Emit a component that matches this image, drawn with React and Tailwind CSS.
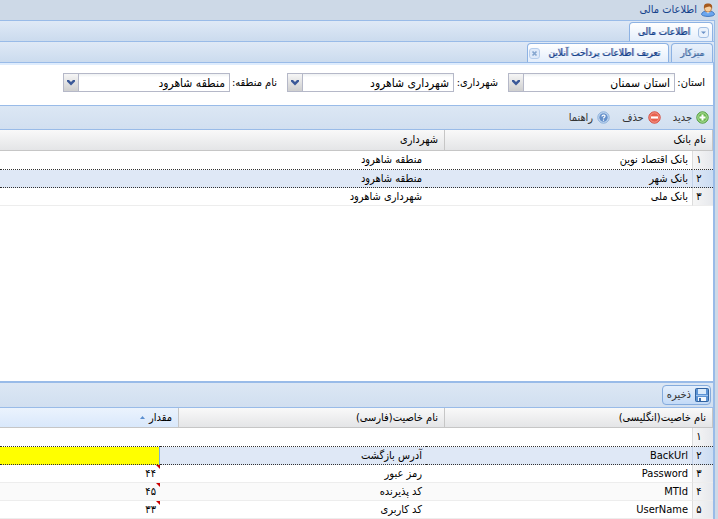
import React from "react";

const banks = [
  { id: 1, no: "۱", name: "بانک اقتصاد نوین", city: "منطقه شاهرود" },
  { id: 2, no: "۲", name: "بانک شهر", city: "منطقه شاهرود" },
  { id: 3, no: "۳", name: "بانک ملی", city: "شهرداری شاهرود" },
];

const properties = [
  { id: 1, no: "۱", en: "", fa: "", value: "" },
  { id: 2, no: "۲", en: "BackUrl", fa: "آدرس بازگشت", value: "" },
  { id: 3, no: "۳", en: "Password", fa: "رمز عبور", value: "۴۴" },
  { id: 4, no: "۴", en: "MTId", fa: "کد پذیرنده", value: "۴۵" },
  { id: 5, no: "۵", en: "UserName", fa: "کد کاربری", value: "۳۳" },
];

function UserIcon() {
  return (
    <svg width="14" height="14" viewBox="0 0 14 14" aria-hidden="true">
      <path d="M.6 11.600C.6 9.200 3 8 7 8s6.400 1.200 6.400 3.600C12.500 14 1.500 14 .6 11.600z" fill="#6ba6ee" stroke="#2765b5" strokeWidth="0.800" />
      <path d="M5 8.500l2 2 2-2z" fill="#fff" />
      <ellipse cx="7" cy="5.200" rx="3.600" ry="3.900" fill="#f7cfa0" stroke="#a8642a" strokeWidth="0.700" />
      <path d="M3 5.500C2.500 1.600 4 .4 7 .4s4.700 1.300 4.100 5.100C10.500 4.300 9.500 3.500 8.500 3.400 6.500 4 4 3.800 3 5.500z" fill="#a65a1e" />
    </svg>
  );
}

function MenuIcon() {
  return (
    <svg width="11" height="11" viewBox="0 0 11 11" aria-hidden="true">
      <rect x="0.500" y="0.500" width="10" height="10" rx="2.500" fill="#eaf2fc" stroke="#a3bfe3" />
      <path d="M3 4.500h5L5.500 7z" fill="#6b92c8" />
    </svg>
  );
}

function CloseIcon() {
  return (
    <svg width="11" height="11" viewBox="0 0 11 11" aria-hidden="true">
      <rect x="0.500" y="0.500" width="10" height="10" rx="2.500" fill="#dfeafa" stroke="#b6cdec" />
      <path d="M3.500 3.500l4 4M7.500 3.500l-4 4" stroke="#86a6cf" strokeWidth="1.700" />
    </svg>
  );
}

function AddIcon() {
  return (
    <svg width="13" height="13" viewBox="0 0 13 13" aria-hidden="true">
      <circle cx="6.500" cy="6.500" r="5.700" fill="#6dba52" stroke="#4d9a3a" />
      <circle cx="6.500" cy="6.500" r="4.700" fill="none" stroke="#b9e2aa" strokeWidth="0.900" />
      <path d="M6.500 3.500v6M3.500 6.500h6" stroke="#fff" strokeWidth="2" />
    </svg>
  );
}

function RemoveIcon() {
  return (
    <svg width="13" height="13" viewBox="0 0 13 13" aria-hidden="true">
      <circle cx="6.500" cy="6.500" r="5.700" fill="#e8604e" stroke="#d5473a" />
      <circle cx="6.500" cy="6.500" r="4.700" fill="none" stroke="#f4a295" strokeWidth="0.900" />
      <path d="M3 6.500h7" stroke="#fff" strokeWidth="2.200" />
    </svg>
  );
}

function HelpIcon() {
  return (
    <svg width="13" height="13" viewBox="0 0 13 13" aria-hidden="true">
      <circle cx="6.500" cy="6.500" r="5.700" fill="#c4d9f1" stroke="#8aafdb" />
      <circle cx="6.500" cy="6.500" r="4.200" fill="#6590ca" />
      <path d="M5 5.400C5 3.600 8 3.600 8 5.300 8 6.300 6.500 6.300 6.500 7.500M6.500 8.500v1.200" fill="none" stroke="#fff" strokeWidth="1.200" />
    </svg>
  );
}

function SaveIcon() {
  return (
    <svg width="14" height="14" viewBox="0 0 14 14" aria-hidden="true">
      <rect x="0.500" y="0.500" width="13" height="13" rx="1" fill="#5c93d4" stroke="#31629f" />
      <rect x="3" y="1" width="8" height="5" fill="#d9eafb" />
      <path d="M1 7.500h12" stroke="#9dc3ee" />
      <rect x="3" y="9" width="8" height="4" fill="#f4f8fc" />
      <rect x="4" y="10" width="2" height="3" fill="#3e6fad" />
    </svg>
  );
}

function Combo({ id, label, value, labelClass }) {
  return (
    <div className="flex items-center">
      <label htmlFor={id} className={`whitespace-nowrap ${labelClass}`}>
        {label}
      </label>
      <div className="relative">
        <select
          id={id}
          className="block h-[19px] w-[167px] appearance-none border border-[#b5b8c8] bg-white bg-linear-to-b from-[#eef1f3] to-white to-20% pr-1 pl-4 text-xs leading-4 text-black outline-none"
        >
          <option>{value}</option>
        </select>
        <span className="pointer-events-none absolute top-px bottom-px left-px flex w-[15px] items-center justify-center border-r border-[#b5b8c8] bg-linear-to-b from-[#f6f6f6] to-[#cfcfcf]">
          <svg width="8" height="6" viewBox="0 0 8 6" aria-hidden="true">
            <path d="M0 0h2l2 2 2-2h2v1.500L4 5.500 0 1.500z" fill="#3b5998" />
          </svg>
        </span>
      </div>
    </div>
  );
}

function ToolButton({ icon, children }) {
  return (
    <button type="button" className="flex items-center gap-1 text-[#333]">
      {icon}
      <span>{children}</span>
    </button>
  );
}

const strip = "flex h-[21px] shrink-0 items-end gap-0.5 border-b border-[#99bbe8] bg-linear-to-b from-[#dfe9f6] to-[#cbdbee] pr-px";
const tab = "flex h-[19px] items-center gap-2 rounded-t-sm border border-b-0 border-[#8db2e3] bg-linear-to-b text-[10px]";
const activeTab = "from-white to-[#e4eefb] text-[#15428b] [text-shadow:1px_0_0_#15428b99]";
const idleTab = "from-[#e9f1fb] to-[#d4e2f5] text-[#416aa3] [text-shadow:1px_0_0_#416aa399]";
const headRow = "bg-linear-to-b from-[#f9f9f9] to-[#e3e4e6]";
const headCell = "border-b border-l border-b-[#c6c6c6] border-l-[#c6c6c6] px-1.5 py-0 text-right font-normal";

function numberCell(active) {
  const base = "border-l py-0 pr-2 pl-0 text-center";
  return active
    ? `${base} border-l-[#c3d3ea] bg-linear-to-l from-[#cbdcf2] to-[#dfe8f6]`
    : `${base} border-l-[#dcdcdc] bg-linear-to-l from-[#e6e8ec] to-[#f6f6f6]`;
}

function rowLine(active, beforeActive) {
  if (active || beforeActive) return "border-b border-b-[#333] [border-bottom-style:dotted]";
  return "border-b border-b-[#ededed]";
}

export default function App() {
  return (
    <div
      dir="rtl"
      className="flex h-screen flex-col overflow-hidden bg-[#cdd9e7] pr-[3px] font-['DejaVu_Sans_Condensed','DejaVu_Sans',sans-serif] text-[11px] leading-[14px] text-black"
    >
      <header className="flex h-5 shrink-0 items-center gap-1 text-[#15428b]">
        <UserIcon />
        <h1>اطلاعات مالی</h1>
      </header>

      <main className="flex min-h-0 flex-1 flex-col border-t border-r border-[#99bbe8] bg-white">
        <nav className={strip}>
          <button type="button" className={`${tab} ${activeTab} pr-[3px] pl-2`}>
            <MenuIcon />
            <span>اطلاعات مالی</span>
          </button>
        </nav>
        <nav className={strip}>
          <button type="button" className={`${tab} ${idleTab} px-2`}>
            میزکار
          </button>
          <button type="button" className={`${tab} ${activeTab} pr-2 pl-px`}>
            <span>تعریف اطلاعات پرداخت آنلاین</span>
            <CloseIcon />
          </button>
        </nav>

        <div className="flex min-h-0 flex-1 flex-col border-r border-[#99bbe8]">
          <form className="flex h-[43px] shrink-0 items-start gap-2.5 border-t-2 border-b border-t-[#deecfd] border-b-[#99bbe8] pt-2 pr-2">
            <Combo id="province" label="استان:" value="استان سمنان" labelClass="w-[30px]" />
            <Combo id="municipality" label="شهرداری:" value="شهرداری شاهرود" labelClass="w-11" />
            <Combo id="region" label="نام منطقه:" value="منطقه شاهرود" labelClass="w-[47px]" />
          </form>

          <div className="flex h-6 shrink-0 items-center gap-3 border-b border-[#99bbe8] bg-linear-to-b from-[#dce7f4] to-[#d1dff0] pr-1">
            <ToolButton icon={<AddIcon />}>جدید</ToolButton>
            <ToolButton icon={<RemoveIcon />}>حذف</ToolButton>
            <ToolButton icon={<HelpIcon />}>راهنما</ToolButton>
          </div>

          <section className="min-h-0 flex-1 overflow-hidden">
            <table className="w-full table-fixed border-separate border-spacing-0">
              <colgroup>
                <col className="w-[21px]" />
                <col className="w-[248px]" />
                <col className="w-[18px]" />
                <col />
              </colgroup>
              <thead>
                <tr className={headRow}>
                  <th colSpan={2} className={`${headCell} h-[21px] border-r border-r-[#c6c6c6]`}>نام بانک</th>
                  <th colSpan={2} className={`${headCell} border-l-0`}>شهرداری</th>
                </tr>
              </thead>
              <tbody>
                {banks.map((bank, i) => {
                  const active = i === 1;
                  const line = rowLine(active, i === 0);
                  return (
                    <tr key={bank.id} className={active ? "bg-[#dfe8f6]" : "bg-white"}>
                      <td className={`${i === 0 ? "h-[19px]" : "h-[18px]"} ${numberCell(active)} ${line}`}>{bank.no}</td>
                      <td colSpan={2} className={`px-1 py-0 ${line}`}>{bank.name}</td>
                      <td className={`px-1 py-0 ${line}`}>{bank.city}</td>
                    </tr>
                  );
                })}
              </tbody>
            </table>
          </section>

          <section className="shrink-0 border-t-2 border-[#99bbe8]">
            <div className="flex h-[25px] items-center border-b border-[#99bbe8] bg-linear-to-b from-[#dce7f4] to-[#d1dff0] pr-0.5">
              <button
                type="button"
                className="flex h-5 items-center gap-1 rounded-sm border border-[#84abdd] bg-linear-to-b from-[#e4effc] to-[#c3daf7] pr-px pl-1 text-[#333]"
              >
                <SaveIcon />
                <span>ذخیره</span>
              </button>
            </div>
            <table className="w-full table-fixed border-separate border-spacing-0">
              <colgroup>
                <col className="w-[21px]" />
                <col className="w-[248px]" />
                <col className="w-[18px]" />
                <col className="w-[248px]" />
                <col className="w-[18px]" />
                <col />
              </colgroup>
              <thead>
                <tr className={headRow}>
                  <th colSpan={2} className={`${headCell} h-5 border-r border-r-[#c6c6c6]`}>نام خاصیت(انگلیسی)</th>
                  <th colSpan={2} className={headCell}>نام خاصیت(فارسی)</th>
                  <th colSpan={2} aria-sort="ascending" className={`${headCell} border-l-0 bg-linear-to-b from-[#ebf3fd] to-[#d9e8fb]`}>
                    <span className="flex items-center gap-1">
                      مقدار
                      <svg width="5" height="3" viewBox="0 0 5 3" aria-hidden="true">
                        <path d="M0 3L2.500 0 5 3z" fill="#5b8fd0" />
                      </svg>
                    </span>
                  </th>
                </tr>
              </thead>
              <tbody>
                {properties.map((item, i) => {
                  const active = i === 1;
                  const line = rowLine(active, i === 0);
                  const rowColor = active ? "bg-[#dfe8f6]" : i === 3 ? "bg-[#fafafa]" : "bg-white";
                  return (
                    <tr key={item.id} className={rowColor}>
                      <td className={`${i === 0 ? "h-[19px]" : "h-[18px]"} ${numberCell(active)} ${line}`}>{item.no}</td>
                      <td colSpan={2} className={`px-1 py-0 ${line}`}>{item.en}</td>
                      <td colSpan={2} className={`px-1 py-0 ${line}`}>{item.fa}</td>
                      <td className={`relative px-1 py-0 ${line} ${active ? "border-r border-r-[#7eadd9] bg-[#ff0]" : ""}`}>
                        {item.value}
                        {item.value && (
                          <svg className="absolute top-0 right-0" width="4" height="4" viewBox="0 0 4 4" aria-hidden="true">
                            <path d="M0 0h4v4z" fill="#c00" />
                          </svg>
                        )}
                      </td>
                    </tr>
                  );
                })}
              </tbody>
            </table>
          </section>
        </div>
      </main>
    </div>
  );
}
